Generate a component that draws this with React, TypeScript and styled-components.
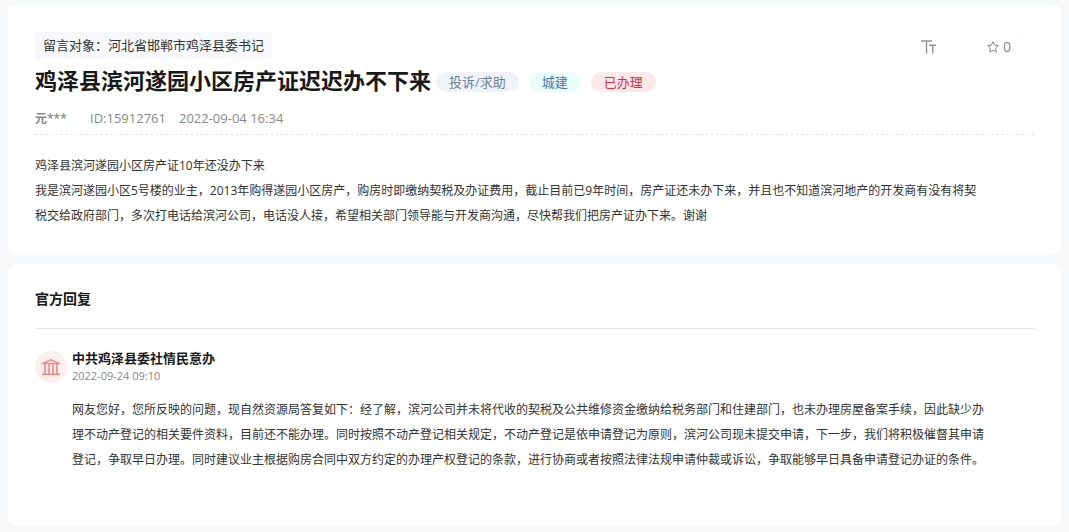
import React from "react";
import styled, { createGlobalStyle } from "styled-components";

const GlobalStyle = createGlobalStyle`
  * { box-sizing: border-box; }
  body {
    margin: 0;
    background: #f7f8fa;
    color: #333;
    font-family: "Open Sans", "Noto Sans CJK SC", sans-serif;
    font-size: 13px;
  }
  h1, h2, h3, p { margin: 0; }
`;

const Page = styled.main`
  display: flex;
  flex-direction: column;
  gap: 9px;
  padding: 5px 8px 6px;
`;

const Card = styled.article`
  padding: 27px;
  border-radius: 8px;
  background: #fff;
`;

const TopBar = styled.div`
  display: flex;
  justify-content: space-between;
  align-items: center;
`;

const Target = styled.span`
  padding: 0 8px;
  border-radius: 2px;
  background: #f6f8fb;
  line-height: 27px;
`;

const Actions = styled.div`
  display: flex;
  align-items: center;
  gap: 51px;
  padding: 3px 23px 0 0;
`;

const ActionButton = styled.button`
  display: flex;
  align-items: center;
  gap: 4px;
  padding: 0;
  border: 0;
  background: none;
  color: #888;
  font: inherit;
  font-size: 14px;
  line-height: 20px;
  cursor: pointer;
`;

const TitleRow = styled.div`
  display: flex;
  align-items: center;
  height: 44px;
`;

const Title = styled.h1`
  margin-right: 5px;
  color: #191919;
  font-size: 22px;
  font-weight: 700;
  line-height: 42px;
  padding-bottom: 2px;
  white-space: nowrap;
`;

const Tags = styled.div`
  display: flex;
  gap: 10px;
  padding-top: 2px;
`;

const Tag = styled.span<{ $color: string; $background: string }>`
  padding: 0 13px;
  border-radius: 10px;
  background: ${(p) => p.$background};
  color: ${(p) => p.$color};
  line-height: 20px;
  white-space: nowrap;
`;

const Meta = styled.div`
  display: flex;
  gap: 13px;
  border-bottom: 1px dashed #e4e4e4;
  color: #888;
  line-height: 31px;
`;

const Author = styled.span`
  min-width: 42px;
  font-size: 12px;
  font-weight: 600;
`;

const Body = styled.p`
  font-size: 12px;
  line-height: 25px;
`;

const Message = styled(Body)`
  margin-top: 18px;
`;

const SectionTitle = styled.h2`
  padding-bottom: 21px;
  border-bottom: 1px solid #e6e6e6;
  color: #191919;
  font-size: 14px;
  font-weight: 700;
  line-height: 16px;
`;

const Reply = styled.section`
  display: flex;
  gap: 5px;
  padding: 20px 0 27px;
`;

const Avatar = styled.span`
  display: flex;
  flex: none;
  align-items: center;
  justify-content: center;
  width: 32px;
  height: 32px;
  margin-top: 2px;
  border-radius: 50%;
  background: #ffeeee;
`;

const ReplyContent = styled.div`
  flex: 1;
  min-width: 0;
`;

const Office = styled.h3`
  color: #191919;
  font-size: 13px;
  font-weight: 700;
  line-height: 18px;
`;

const ReplyTime = styled.time`
  display: block;
  margin-bottom: 12px;
  color: #888;
  font-size: 11px;
  line-height: 18px;
`;

const TextSizeIcon = () => (
  <svg width="15" height="14" viewBox="0 0 15 14" fill="none" stroke="#909398" strokeWidth="1.4" aria-hidden="true">
    <path d="M0 1H11M5.5 1V13.4M8 5.3H15M11.8 5.3V13.4" />
  </svg>
);

const StarIcon = () => (
  <svg width="12" height="12" viewBox="0 0 12 12" fill="none" stroke="#888" strokeLinejoin="round" aria-hidden="true">
    <path d="M6 .8 7.6 4.1 11.3 4.6 8.6 7.2 9.3 11 6 9.2 2.7 11 3.4 7.2 .7 4.6 4.4 4.1Z" />
  </svg>
);

const OfficeIcon = () => (
  <svg width="18" height="16" viewBox="0 0 18 16" fill="none" stroke="#eb8a86" aria-hidden="true">
    <path d="M1.5 4.2 9 .8 16.5 4.2" strokeWidth="1.3" />
    <path d="M0 4.5H18M0 15.3H18" strokeWidth="1.4" />
    <path d="M3 5V15M7 5V15M11 5V15M15 5V15" strokeWidth="1.6" />
  </svg>
);

export default function App() {
  return (
    <>
      <GlobalStyle />
      <Page>
        <Card>
          <TopBar>
            <Target>留言对象：河北省邯郸市鸡泽县委书记</Target>
            <Actions>
              <ActionButton type="button" aria-label="字体大小">
                <TextSizeIcon />
              </ActionButton>
              <ActionButton type="button">
                <StarIcon />0
              </ActionButton>
            </Actions>
          </TopBar>
          <TitleRow>
            <Title>鸡泽县滨河遂园小区房产证迟迟办不下来</Title>
            <Tags>
              <Tag $color="#6f7f96" $background="#f0f3fa">投诉/求助</Tag>
              <Tag $color="#3f78bf" $background="#ebfdfa">城建</Tag>
              <Tag $color="#d9303a" $background="#fbe8e9">已办理</Tag>
            </Tags>
          </TitleRow>
          <Meta>
            <Author>元***</Author>
            <span>ID:15912761</span>
            <time dateTime="2022-09-04T16:34">2022-09-04 16:34</time>
          </Meta>
          <Message>
            鸡泽县滨河遂园小区房产证10年还没办下来
            <br />
            我是滨河遂园小区5号楼的业主，2013年购得遂园小区房产，购房时即缴纳契税及办证费用，截止目前已9年时间，房产证还未办下来，并且也不知道滨河地产的开发商有没有将契
            <br />
            税交给政府部门，多次打电话给滨河公司，电话没人接，希望相关部门领导能与开发商沟通，尽快帮我们把房产证办下来。谢谢
          </Message>
        </Card>
        <Card>
          <SectionTitle>官方回复</SectionTitle>
          <Reply>
            <Avatar>
              <OfficeIcon />
            </Avatar>
            <ReplyContent>
              <Office>中共鸡泽县委社情民意办</Office>
              <ReplyTime dateTime="2022-09-24T09:10">2022-09-24 09:10</ReplyTime>
              <Body>
                网友您好，您所反映的问题，现自然资源局答复如下：经了解，滨河公司并未将代收的契税及公共维修资金缴纳给税务部门和住建部门，也未办理房屋备案手续，因此缺少办
                <br />
                理不动产登记的相关要件资料，目前还不能办理。同时按照不动产登记相关规定，不动产登记是依申请登记为原则，滨河公司现未提交申请，下一步，我们将积极催督其申请
                <br />
                登记，争取早日办理。同时建议业主根据购房合同中双方约定的办理产权登记的条款，进行协商或者按照法律法规申请仲裁或诉讼，争取能够早日具备申请登记办证的条件。
              </Body>
            </ReplyContent>
          </Reply>
        </Card>
      </Page>
    </>
  );
}
